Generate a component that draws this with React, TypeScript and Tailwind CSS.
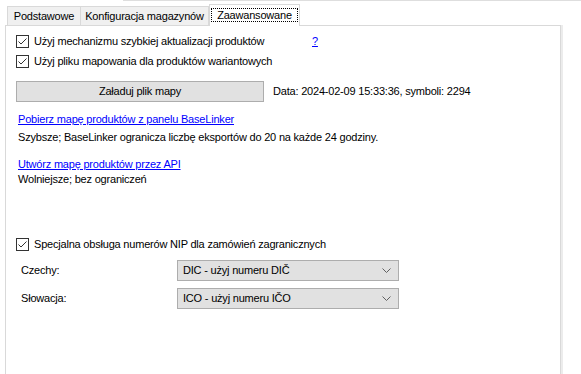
import React from 'react';

function CheckBox() {
    return (
        <svg width="13" height="13" viewBox="0 0 13 13" className="shrink-0">
            <rect x="0.5" y="0.5" width="12" height="12" fill="#ffffff" stroke="#333333" />
            <polyline points="2.5,6.5 5,9 10.5,3.5" fill="none" stroke="#333333" strokeWidth="1" />
        </svg>
    );
}

function Chevron() {
    return (
        <svg width="9" height="5" viewBox="0 0 9 5" className="shrink-0">
            <polyline points="0.5,0.5 4.5,4.5 8.5,0.5" fill="none" stroke="#606060" strokeWidth="1" />
        </svg>
    );
}

function Combo({ value }: { value: string }) {
    return (
        <div className="w-[222px] h-[21px] bg-[#e1e1e1] border border-[#adadad] flex items-center pl-[5px] pr-[7px]">
            <span className="flex-1 leading-[13px]">{value}</span>
            <Chevron />
        </div>
    );
}

export default function App() {
    return (
        <div className="w-[581px] h-[374px] bg-white overflow-hidden text-[11px] tracking-[-0.2px] text-black font-['Liberation_Sans',Arial,sans-serif]">
            <div className="h-px ml-[123px] bg-[#dedede]" />

            {/* tab strip */}
            <div className="flex items-end mt-[3px] ml-[7px] h-[21px]">
                <div className="h-[19px] w-[74px] bg-[#f0f0f0] border border-b-0 border-[#d9d9d9] pt-[3px] text-center leading-[13px]">
                    Podstawowe
                </div>
                <div className="h-[19px] w-[128px] bg-[#f0f0f0] border border-l-0 border-b-0 border-[#d9d9d9] pt-[3px] text-center leading-[13px]">
                    Konfiguracja magazynów
                </div>
                <div className="relative z-10 h-[22px] -mb-px w-[91px] bg-white border border-b-0 border-[#d9d9d9] pt-[3px] px-[1px]">
                    <div className="h-[14px] border border-dotted border-black leading-[12px] text-center">
                        Zaawansowane
                    </div>
                </div>
            </div>

            <div className="flex h-[360px]">
                {/* panel */}
                <div className="ml-[5px] w-[556px] border border-b-0 border-[#d9d9d9] bg-white pl-[10px] pt-[9px]">
                    <div className="flex items-center h-[13px] leading-[13px]">
                        <CheckBox />
                        <span className="ml-[5px] w-[278px]">Użyj mechanizmu szybkiej aktualizacji produktów</span>
                        <span className="text-[#0000ff] underline">?</span>
                    </div>
                    <div className="flex items-center h-[13px] mt-[7px] leading-[13px]">
                        <CheckBox />
                        <span className="ml-[5px]">Użyj pliku mapowania dla produktów wariantowych</span>
                    </div>

                    <div className="flex items-center mt-[13px]">
                        <button className="w-[248px] h-[21px] bg-[#e1e1e1] border border-[#adadad] leading-[13px]">
                            Załaduj plik mapy
                        </button>
                        <span className="ml-[9px] leading-[13px]">Data: 2024-02-09 15:33:36, symboli: 2294</span>
                    </div>

                    <div className="pl-[2px] leading-[13px]">
                        <div className="mt-[11px] text-[#0000ff] underline">Pobierz mapę produktów z panelu BaseLinker</div>
                        <div className="mt-[5px]">Szybsze; BaseLinker ogranicza liczbę eksportów do 20 na każde 24 godziny.</div>
                        <div className="mt-[14px] text-[#0000ff] underline">Utwórz mapę produktów przez API</div>
                        <div className="mt-[2px]">Wolniejsze; bez ograniczeń</div>
                    </div>

                    <div className="flex items-center h-[13px] mt-[52px] leading-[13px]">
                        <CheckBox />
                        <span className="ml-[5px]">Specjalna obsługa numerów NIP dla zamówień zagranicznych</span>
                    </div>

                    <div className="flex items-center mt-[9px] pl-[5px]">
                        <span className="w-[156px] leading-[13px]">Czechy:</span>
                        <Combo value="DIC - użyj numeru DIČ" />
                    </div>
                    <div className="flex items-center mt-[7px] pl-[5px]">
                        <span className="w-[156px] leading-[13px]">Słowacja:</span>
                        <Combo value="ICO - użyj numeru IČO" />
                    </div>
                </div>
                <div className="w-[2px] bg-[#ececec]" />
            </div>
        </div>
    );
}
